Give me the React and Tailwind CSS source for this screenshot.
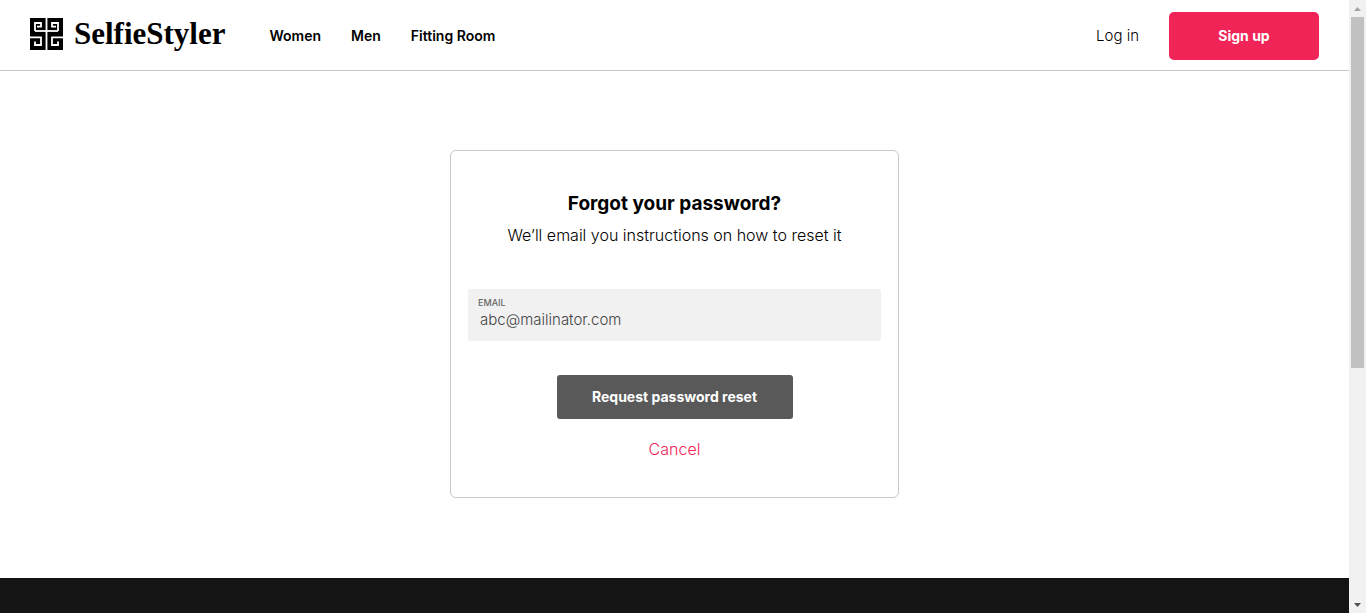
function LogoMark() {
  return (
    <svg width="33" height="32" viewBox="0 0 33 32" aria-hidden="true" className="shrink-0">
      <rect width="33" height="32" fill="#000" />
      <g fill="none" stroke="#fff" strokeWidth="1.8">
        <path d="M16.5 0V32" />
        <path d="M5 13H28" />
        <path d="M7 8.7H11V5H5V13" />
        <path d="M26 8.7H22V5H28V13" />
        <path d="M0 19.3H11V27H5V23.6" />
        <path d="M33 19.3H22V27H28V23.6" />
      </g>
    </svg>
  );
}

function Scrollbar() {
  return (
    <div aria-hidden="true" className="flex w-[17px] shrink-0 flex-col items-center justify-between bg-[#f1f1f1]">
      <div className="flex w-full flex-col items-center px-0.5">
        <div className="flex h-[17px] items-center">
          <svg width="7" height="4" viewBox="0 0 7 4"><path d="M3.5 0L7 4H0Z" fill="#a3a3a3" /></svg>
        </div>
        <div className="h-[351px] w-[13px] bg-[#c1c1c1]" />
      </div>
      <div className="flex h-[17px] items-center">
        <svg width="7" height="4" viewBox="0 0 7 4"><path d="M3.5 4L7 0H0Z" fill="#505050" /></svg>
      </div>
    </div>
  );
}

export default function App() {
  return (
    <div className="flex h-screen overflow-hidden bg-white font-['Inter',sans-serif] text-black">
      <div className="flex min-w-0 flex-1 flex-col">
        <header className="flex items-center border-b border-[#c8c8c8] px-[30px] pt-3 pb-2.5">
          <a href="#" className="mb-1 flex items-center gap-[11px]">
            <LogoMark />
            <span className="font-['Liberation_Serif',serif] text-[31px] leading-8 font-bold">SelfieStyler</span>
          </a>
          <nav className="ml-11 flex gap-[30px] text-sm leading-6 font-semibold">
            <a href="#">Women</a>
            <a href="#">Men</a>
            <a href="#">Fitting Room</a>
          </nav>
          <div className="ml-auto flex items-center gap-[30px] leading-6">
            <a href="#" className="text-[15px] font-light">Log in</a>
            <button type="button" className="h-12 w-[150px] rounded-[5px] bg-[#f02457] text-sm font-bold text-white">Sign up</button>
          </div>
        </header>
        <main className="flex flex-1 flex-col items-center pt-[79px] pb-20">
          <form onSubmit={(e) => e.preventDefault()} className="flex w-full max-w-[449px] flex-col items-center rounded-md border border-[#cacaca] px-[17px] pt-[41px] pb-9">
            <h1 className="text-[19px] leading-6 font-bold">Forgot your password?</h1>
            <p className="mt-[7px] text-base leading-6 font-light">We’ll email you instructions on how to reset it</p>
            <div className="mt-[42px] flex h-[52px] w-full flex-col rounded-xs bg-[#f1f1f1] px-2.5 pt-2">
              <label htmlFor="email" className="text-[9px] leading-3 font-medium text-[#666]">EMAIL</label>
              <input id="email" type="email" defaultValue="abc@mailinator.com" className="w-full bg-transparent px-0.5 text-[15px] leading-[22px] font-light text-[#444] outline-none" />
            </div>
            <button type="submit" className="mt-[34px] h-11 w-[236px] rounded-[3px] bg-[#595959] text-sm font-bold text-white">Request password reset</button>
            <a href="#" className="mt-[18px] text-base leading-6 font-light text-[#f02457]">Cancel</a>
          </form>
        </main>
        <footer className="h-[35px] shrink-0 bg-[#141414]" />
      </div>
      <Scrollbar />
    </div>
  );
}
